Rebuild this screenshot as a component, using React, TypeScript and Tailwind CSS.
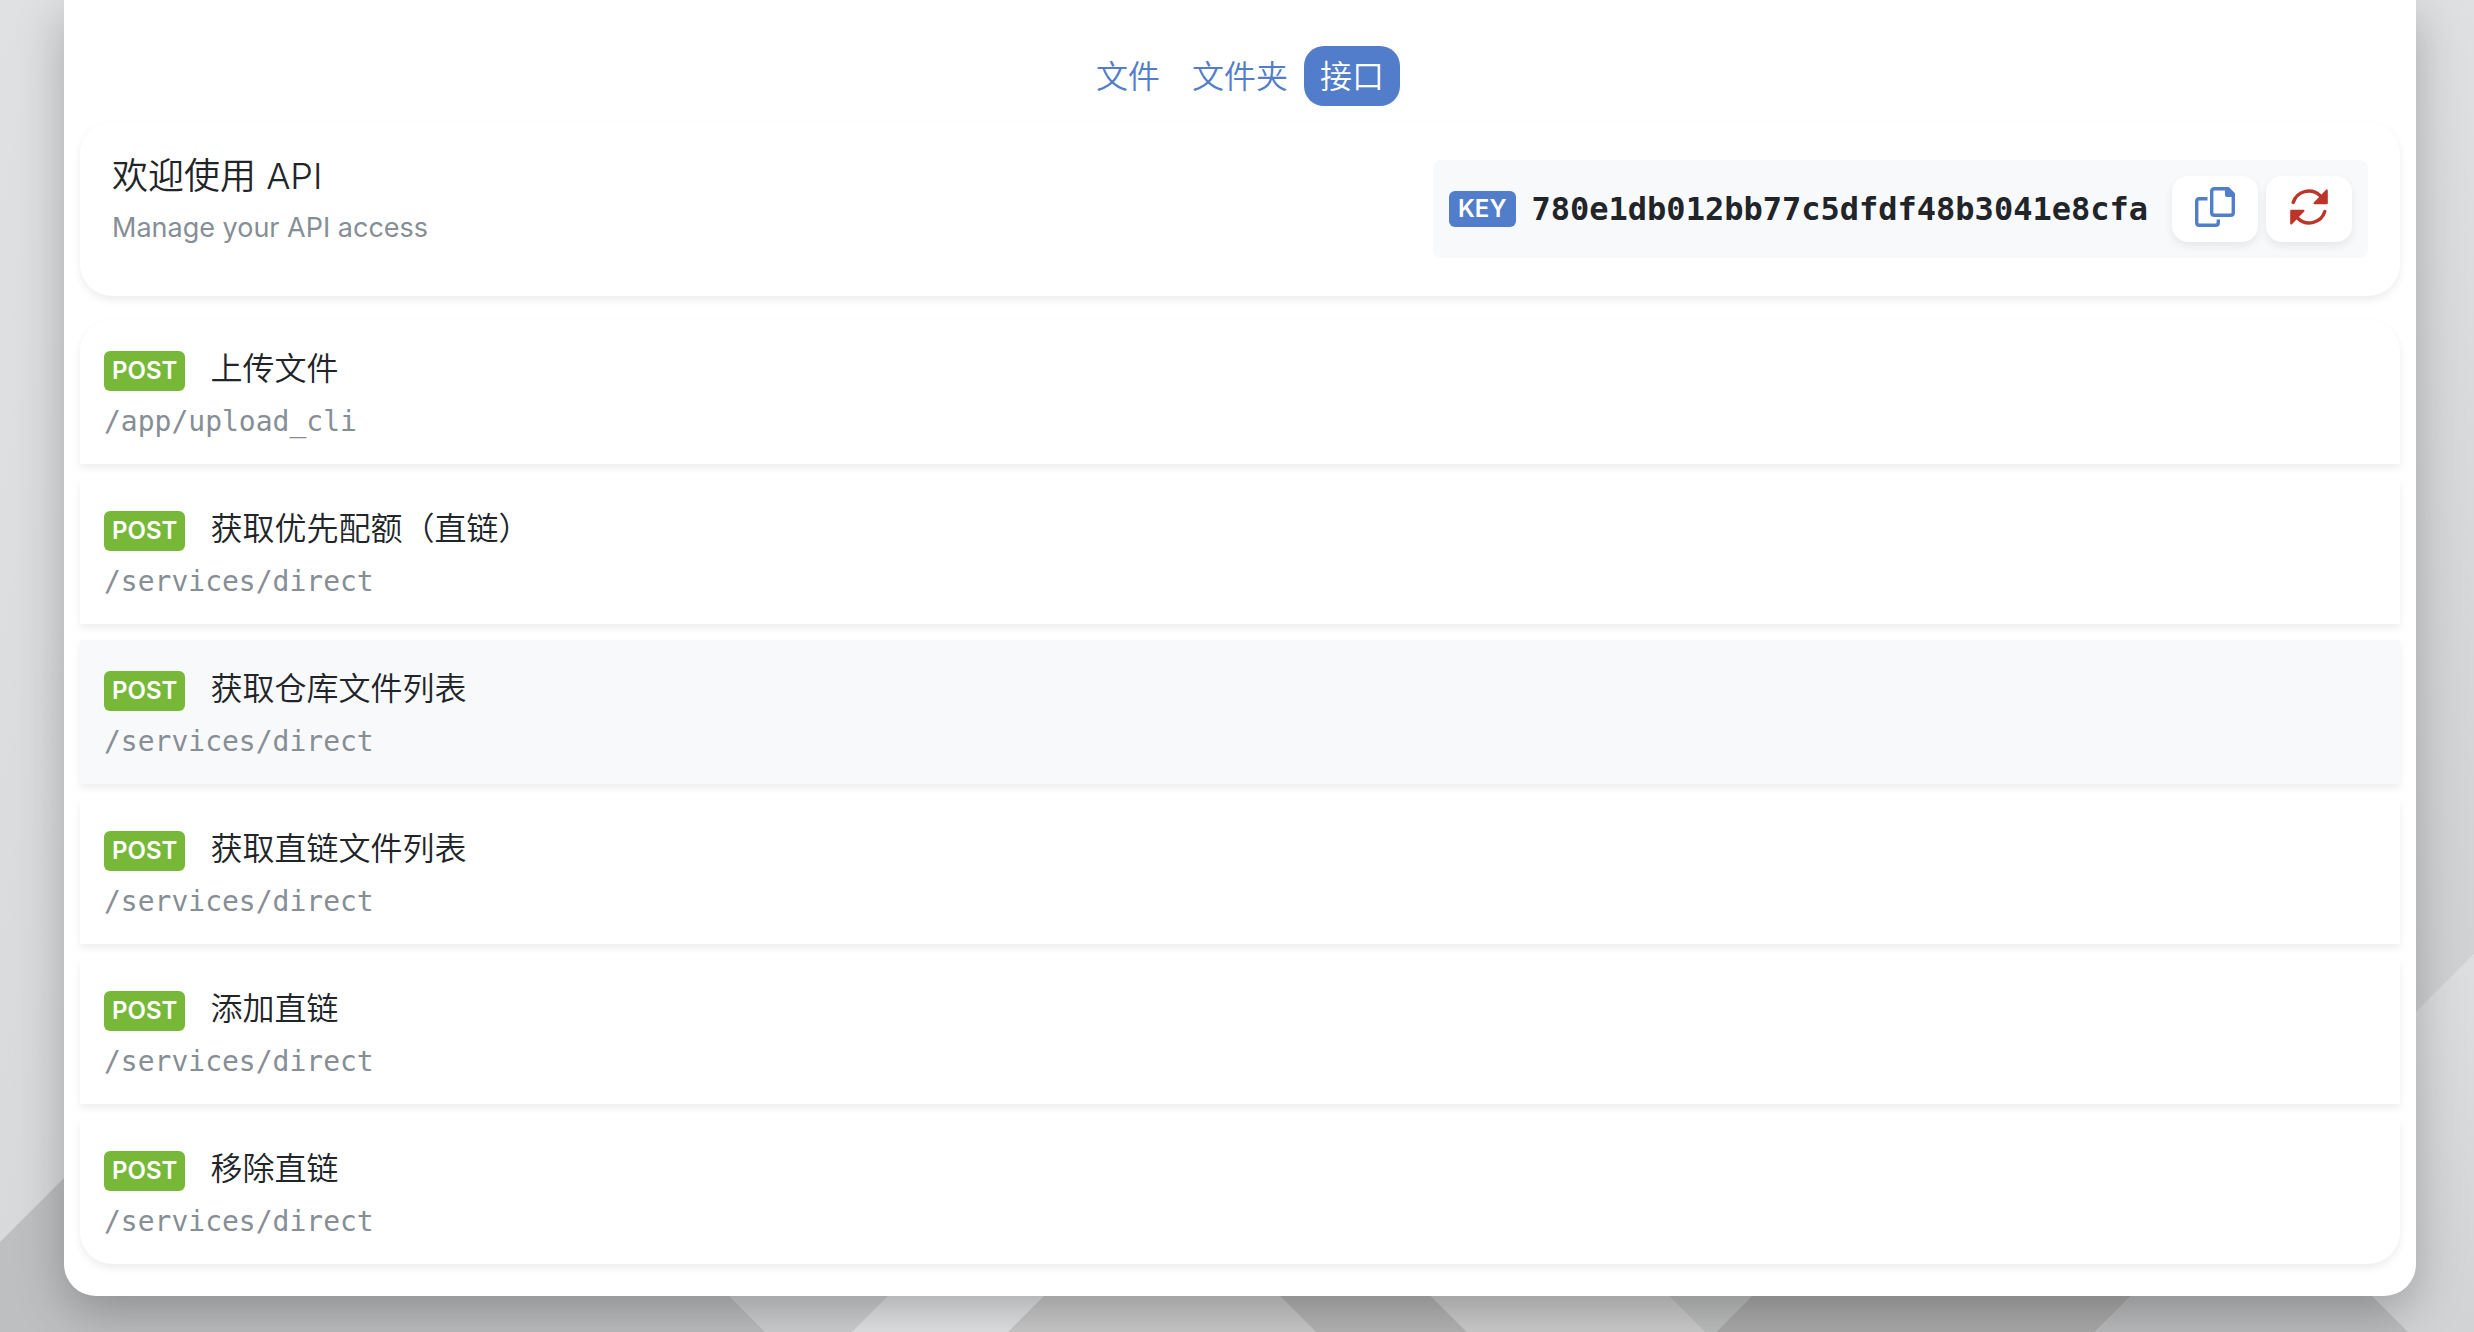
import { ReactNode } from "react";

const endpoints = [
  { title: "上传文件", path: "/app/upload_cli" },
  { title: "获取优先配额（直链）", path: "/services/direct" },
  { title: "获取仓库文件列表", path: "/services/direct", active: true },
  { title: "获取直链文件列表", path: "/services/direct" },
  { title: "添加直链", path: "/services/direct" },
  { title: "移除直链", path: "/services/direct" },
];

const tabs = [
  { name: "文件" },
  { name: "文件夹" },
  { name: "接口", active: true },
];

function Background() {
  return (
    <svg
      className="absolute inset-0 size-full"
      viewBox="0 0 2474 1332"
      preserveAspectRatio="none"
      aria-hidden="true"
    >
      <defs>
        <linearGradient id="base" x1="0" y1="0" x2="0" y2="1">
          <stop offset="0" stopColor="#e0e1e3" />
          <stop offset="1" stopColor="#d8d9db" />
        </linearGradient>
        <linearGradient id="right" x1="0" y1="0" x2="0" y2="1">
          <stop offset="0" stopColor="#dfe0e2" />
          <stop offset="1" stopColor="#cecfd1" />
        </linearGradient>
        <linearGradient id="corner" x1="0" y1="0" x2="0" y2="1">
          <stop offset="0" stopColor="#dddee0" />
          <stop offset="1" stopColor="#d2d3d5" />
        </linearGradient>
      </defs>
      <rect width="2474" height="1332" fill="url(#base)" />
      <path d="M2300 0H2474V954L2300 1128Z" fill="url(#right)" />
      <path d="M2474 954V1332H2300V1128Z" fill="url(#corner)" />
      <path d="M0 1242L174 1068H693L765 1332H0Z" fill="#bebfc1" />
      <path d="M693 1260H924L852 1332H765Z" fill="#d0d1d2" />
      <path d="M924 1260H1080L1008 1332H852Z" fill="#e4e5e6" />
      <path d="M1080 1260H1244L1316 1332H1008Z" fill="#cbcbcc" />
      <path d="M1244 1260H1395L1467 1332H1316Z" fill="#b6b6b7" />
      <path d="M1395 1260H1633L1705 1332H1467Z" fill="#cecece" />
      <path d="M1633 1260H1788L1716 1332H1705Z" fill="#bfc0c0" />
      <path d="M1788 1260H2167L2095 1332H1716Z" fill="#acacad" />
      <path d="M2167 1260H2336L2408 1332H2095Z" fill="#bcbdbe" />
    </svg>
  );
}

function CopyIcon() {
  return (
    <svg className="h-10 w-10" viewBox="0 0 40 40" fill="none" aria-hidden="true">
      <path
        d="M12.5 11.7H4.5C2.7 11.7 1.7 12.7 1.7 14.5V35.5C1.7 37.3 2.7 38.3 4.5 38.3H20.5C22.3 38.3 23.3 37.3 23.3 35.5V32.5"
        stroke="#527dca"
        strokeWidth="3.4"
      />
      <path
        d="M19.5 1.7H33L38.3 7V25.5C38.3 27.3 37.3 28.3 35.5 28.3H19.5C17.7 28.3 16.7 27.3 16.7 25.5V4.5C16.7 2.7 17.7 1.7 19.5 1.7Z"
        stroke="#527dca"
        strokeWidth="3.4"
      />
      <path d="M30 1V8C30 9.3 30.7 10 32 10H39V6.5L33.5 1Z" fill="#527dca" />
    </svg>
  );
}

function RefreshIcon() {
  return (
    <svg className="h-9 w-[38px]" viewBox="0 0 38 36" fill="none" aria-hidden="true">
      <path
        d="M3.2 13.5A16.3 16.3 0 0 1 30 6.6M34.8 22.5A16.3 16.3 0 0 1 8 29.4"
        stroke="#bd3429"
        strokeWidth="3.4"
        strokeLinecap="round"
      />
      <path
        d="M36.8 1.4V14.2H24.5ZM1.2 34.6V21.8H13.5Z"
        fill="#bd3429"
        stroke="#bd3429"
        strokeWidth="2"
        strokeLinejoin="round"
      />
    </svg>
  );
}

function IconButton({ label, children }: { label: string; children: ReactNode }) {
  return (
    <button
      type="button"
      aria-label={label}
      className="flex h-[66px] w-[86px] items-center justify-center rounded-2xl bg-white pb-1 shadow-[0_4px_8px_rgba(0,0,0,0.075)]"
    >
      {children}
    </button>
  );
}

export default function App() {
  return (
    <div className="relative min-h-screen bg-[#d8d9db] pb-9 pl-16 pr-[58px] font-['Inter','Noto_Sans_CJK_SC',sans-serif] text-[#212529]">
      <Background />

      <main className="relative rounded-b-[32px] bg-white px-4 pb-8 pt-[46px] shadow-[0_16px_48px_rgba(0,0,0,0.25)]">
        {/* Tabs */}
        <nav className="flex justify-center">
          {tabs.map((tab) => (
            <a
              key={tab.name}
              href="#"
              className={`flex h-[60px] items-center rounded-[20px] px-4 pt-0.5 text-[32px] font-[350] leading-none ${
                tab.active ? "bg-[#527dca] text-white" : "text-[#527dca]"
              }`}
            >
              {tab.name}
            </a>
          ))}
        </nav>

        {/* API key */}
        <section className="mt-4 flex items-start justify-between rounded-[32px] bg-white px-8 py-[38px] shadow-[0_4px_8px_rgba(0,0,0,0.075)]">
          <div className="-mt-2">
            <h1 className="text-[36px] font-[350] leading-[48px]">欢迎使用 API</h1>
            <p className="mt-2 text-[27px] leading-10 text-[#868e96]">Manage your API access</p>
          </div>
          <div className="flex items-center rounded-lg bg-[#f8f9fb] p-4">
            <span className="rounded-md bg-[#527dca] px-[9px] text-2xl font-semibold leading-9 text-white">
              KEY
            </span>
            <code className="ml-4 font-['DejaVu_Sans_Mono',monospace] text-[32px] font-bold leading-10">
              780e1db012bb77c5dfdf48b3041e8cfa
            </code>
            <div className="ml-6 flex gap-2">
              <IconButton label="复制">
                <CopyIcon />
              </IconButton>
              <IconButton label="刷新">
                <RefreshIcon />
              </IconButton>
            </div>
          </div>
        </section>

        {/* Endpoints */}
        <ul className="mt-6 flex flex-col gap-4">
          {endpoints.map((item) => (
            <li
              key={item.title}
              className={`px-6 pb-[22px] pt-[26px] shadow-[0_4px_8px_rgba(0,0,0,0.075)] first:rounded-t-[32px] last:rounded-b-[32px] ${
                item.active ? "bg-[#f8f9fb]" : "bg-white"
              }`}
            >
              <div className="flex h-[46px] items-center">
                <span className="mt-1 rounded-md bg-[#77b839] px-2 text-2xl font-semibold leading-10 text-white">
                  POST
                </span>
                <h2 className="ml-[25px] text-[32px] font-[350] leading-[46px]">{item.title}</h2>
              </div>
              <p className="mt-2.5 font-['DejaVu_Sans_Mono',monospace] text-[28px] leading-10 text-[#868e96]">
                {item.path}
              </p>
            </li>
          ))}
        </ul>
      </main>
    </div>
  );
}
